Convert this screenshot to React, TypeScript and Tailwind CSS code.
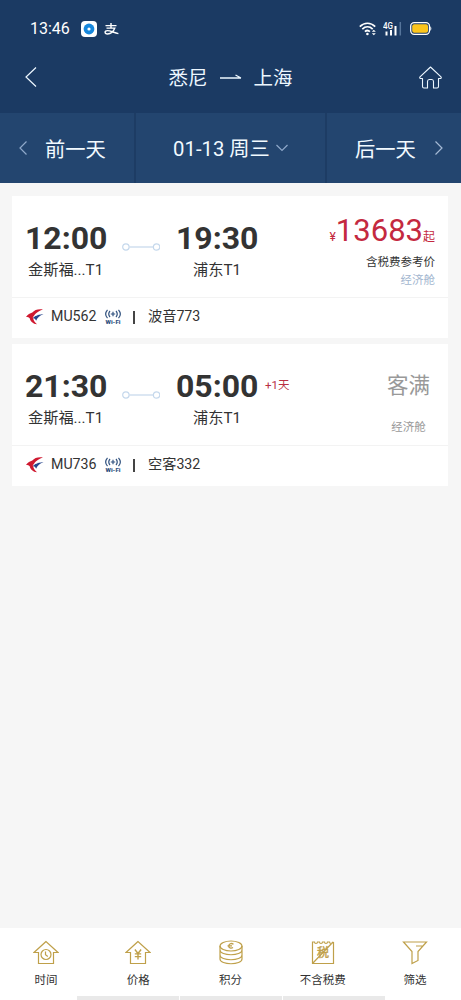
import React from 'react';

interface Flight {
  depart: string;
  arrive: string;
  nextDay?: string;
  price?: string;
  no: string;
  plane: string;
}

const flights: Flight[] = [
  { depart: '12:00', arrive: '19:30', price: '13683', no: 'MU562', plane: '波音773' },
  { depart: '21:30', arrive: '05:00', nextDay: '+1天', no: 'MU736', plane: '空客332' },
];

const StatusBar: React.FC = () => (
  <div className="flex h-[44px] items-center pt-[13px] pr-[29px] pl-[30px] text-white">
    <span className="w-[51px] text-[16px] leading-none whitespace-nowrap">13:46</span>
    <svg width="16" height="16" viewBox="0 0 16 16">
      <rect width="16" height="16" rx="4" fill="#fff" />
      <circle cx="8" cy="8" r="5.4" fill="#1787dc" />
      <circle cx="8" cy="8" r="1.6" fill="#fff" />
    </svg>
    <svg className="ml-[7px]" width="15" height="12" viewBox="0 0 15 12" fill="none" stroke="#fff" strokeWidth="1.4">
      <path d="M1.5 2.6h11M7 0v5M2.5 5.1h8.3C9.7 8 7.3 11 3.5 11 .3 11 .3 7.6 3.4 7.6c3.2 0 6.8 2.3 11 3" />
    </svg>
    <svg className="ml-auto" width="18" height="14" viewBox="0 0 18 14" fill="none" stroke="#fff" strokeWidth="1.7">
      <path d="M.8 4.6c4.5-4.5 10.9-4.5 15.4 0M3.3 7.2c3.1-3 7.3-3 10.4 0M5.9 9.7c1.5-1.4 3.5-1.5 5 0" />
      <circle cx="8.4" cy="12" r="1.3" fill="#fff" stroke="none" />
      <path d="M12.8 9.7l2-2 2 2zM12.8 11.2l2 2 2-2z" fill="#fff" stroke="none" />
    </svg>
    <svg className="ml-[6px]" width="20" height="15" viewBox="0 0 20 15">
      <text x="0" y="7.5" fontSize="8.5" fontWeight="500" fill="#fff" textLength="10" lengthAdjust="spacingAndGlyphs">4G</text>
      <path d="M3.5 10.5v4M8 9v5.5M12.5 5v9.5" stroke="#fff" strokeWidth="2" />
      <path d="M17.3 1v13.5" stroke="#56759b" strokeWidth="1.5" />
    </svg>
    <svg className="ml-[7px]" width="22" height="13" viewBox="0 0 22 13">
      <rect x=".7" y=".7" width="18.8" height="11.6" rx="3.5" fill="none" stroke="#fff" strokeWidth="1.3" />
      <rect x="2.2" y="2.2" width="15.8" height="8.6" rx="2" fill="#fcc51c" />
      <path d="M20.3 4.2c1.4.8 1.4 3.8 0 4.6z" fill="#fff" />
    </svg>
  </div>
);

const TitleBar: React.FC = () => (
  <div className="flex h-[69px] items-center px-[19px] pb-[3px] text-[#edf7ff]">
    <svg className="ml-[6px]" width="12" height="20" viewBox="0 0 12 20" fill="none" stroke="currentColor" strokeWidth="1.2">
      <path d="M11 .5L1 10l10 9.5" />
    </svg>
    <div className="flex flex-1 items-center justify-center pt-[3px] pl-[5px] text-[19.5px]">
      <span>悉尼</span>
      <svg className="mx-[12px] mb-[3px]" width="22" height="8" viewBox="0 0 22 8" fill="none" stroke="currentColor" strokeWidth="1.3">
        <path d="M0 5h21M15.5 2l5.5 3" />
      </svg>
      <span>上海</span>
    </div>
    <svg className="mt-[1px]" width="23" height="23" viewBox="0 0 23 23" fill="none" stroke="currentColor" strokeWidth="1.1" strokeLinejoin="round">
      <path d="M11.5 1L22 10.8c.6.7.1 1.7-.8 1.7h-1.7v8c0 .9-.6 1.5-1.5 1.5h-3.500v-6.500c0-1.200-.7-2-1.800-2h-2.400c-1.100 0-1.800.8-1.800 2V22H5c-.9 0-1.500-.6-1.500-1.500v-8H1.800c-.9 0-1.400-1-.8-1.700z" />
    </svg>
  </div>
);

const DayTabs: React.FC = () => (
  <div className="flex h-[70px] bg-[#23456f] text-[20.3px] text-[#f2faff]">
    <div className="flex w-[136px] items-center border-r-2 border-[#1d3c64] pl-[19px]">
      <svg width="8" height="14" viewBox="0 0 8 14" fill="none" stroke="#8fa9ca" strokeWidth="1.2">
        <path d="M7.5.5L1 7l6.500 6.500" />
      </svg>
      <span className="ml-[18px] pt-[4px]">前一天</span>
    </div>
    <div className="flex w-[191px] items-center justify-center border-r-2 border-[#1d3c64]">
      <span className="pt-[3px]">01-13 周三</span>
      <svg className="ml-[6px]" width="12" height="8" viewBox="0 0 12 8" fill="none" stroke="#8fa9ca" strokeWidth="1.2">
        <path d="M.5 1L6 6.500 11.500 1" />
      </svg>
    </div>
    <div className="flex flex-1 items-center justify-between pr-[18px] pl-[28px]">
      <span className="pt-[4px]">后一天</span>
      <svg width="8" height="14" viewBox="0 0 8 14" fill="none" stroke="#a5bad5" strokeWidth="1.2">
        <path d="M.5.5L7 7 .5 13.500" />
      </svg>
    </div>
  </div>
);

const AirlineLogo: React.FC = () => (
  <svg width="18" height="16" viewBox="0 0 18 16">
    <path d="M17 .4C12-.2 8.500.8 6.300 3.600 4 4.300 1.800 5.600 0 8c1.800 0 3 .4 3.700 1.300C4.400 12.500 7 15 11 15.300 8.600 13.200 7 11 7.300 8.700 8 5.300 11 2.600 17 .4z" fill="#cf1930" />
    <path d="M17.500 5.300C13 4.700 9 5.900 6.800 9.300c1.400-.5 2.600.3 3.300 2.400C11.500 8.700 13.800 6.500 17.500 5.300z" fill="#28478e" />
    <path d="M16.500 5.100C12 4.600 8.600 5.600 6.200 9.200 8.800 6.800 12.500 5.700 16.500 5.100z" fill="#fff" />
  </svg>
);

const WifiBadge: React.FC = () => (
  <svg width="16" height="16" viewBox="0 0 16 16" fill="none" stroke="#31527f" strokeWidth="1.2">
    <path d="M2.500.8c-2.200 2.500-2.200 5.900 0 8.400M5 2c-1.500 1.800-1.500 4.200 0 6M13.500.8c2.200 2.500 2.200 5.900 0 8.400M11 2c1.500 1.800 1.500 4.200 0 6M8 2.800v4.400M5.800 5h4.400" />
    <text x=".5" y="15" fontSize="5.5" fontWeight="900" fill="#31527f" stroke="none" textLength="15" lengthAdjust="spacingAndGlyphs">Wi-Fi</text>
  </svg>
);

const FlightCard: React.FC<{ flight: Flight }> = ({ flight }) => (
  <div className="flex h-[142px] flex-col bg-white text-[#333]">
    <div className="flex h-[102px] border-b border-[#f3f3f3] pl-[13px]">
      <div className="w-[83px] pt-[23px]">
        <div className="text-[32px] leading-[38px] font-bold whitespace-nowrap">{flight.depart}</div>
        <div className="pl-[3px] text-[15.2px] leading-[26px] whitespace-nowrap">金斯福...T1</div>
      </div>
      <svg className="mt-[46px] ml-[14px]" width="38" height="10" viewBox="0 0 38 10" fill="none" stroke="#c5d8ec" strokeWidth="1.2">
        <circle cx="3.9" cy="5" r="3.2" />
        <circle cx="34.6" cy="5" r="3.2" />
        <path d="M7.500 5h23.500" />
      </svg>
      <div className="ml-[16px] w-[83px] pt-[23px]">
        <div className="text-[32px] leading-[38px] font-bold whitespace-nowrap">{flight.arrive}</div>
        <div className="pl-[17px] text-[15.2px] leading-[26px] whitespace-nowrap">浦东T1</div>
      </div>
      <span className="ml-[6px] pt-[32px] text-[11.5px] leading-[18px] whitespace-nowrap text-[#b92f43]">{flight.nextDay}</span>
      {flight.price ? (
        <div className="ml-auto flex flex-col items-end pr-[13px] pt-[16px] text-[11.5px] whitespace-nowrap">
          <div className="flex items-baseline text-[#c42940]">
            <span className="text-[12px]">¥</span>
            <span className="text-[31px] leading-[38px]">{flight.price}</span>
            <span className="text-[12px]">起</span>
          </div>
          <span className="mt-[3px] leading-[18px]">含税费参考价</span>
          <span className="leading-[19px] text-[#a3b6cf]">经济舱</span>
        </div>
      ) : (
        <div className="ml-auto flex flex-col items-center pr-[18px] pt-[26px] whitespace-nowrap text-[#999]">
          <span className="text-[21.5px] leading-[32px]">客满</span>
          <span className="mt-[16px] text-[11.5px] leading-[18px]">经济舱</span>
        </div>
      )}
    </div>
    <div className="flex h-[38px] items-center pl-[14px] text-[14.2px]">
      <AirlineLogo />
      <span className="ml-[7px] w-[54px]">{flight.no}</span>
      <WifiBadge />
      <span className="ml-[12px] h-[13px] w-[1.5px] bg-[#444]" />
      <span className="ml-[13.5px]">{flight.plane}</span>
    </div>
  </div>
);

const HOUSE = 'M13 1.5L1 12.5h4.5v11h15v-11H25z';

const filters = [
  {
    label: '时间',
    icon: (
      <>
        <path d={HOUSE} />
        <circle cx="13" cy="14.5" r="5" />
        <path d="M12.5 11.5v3.300l2.300 1.700" />
      </>
    ),
  },
  {
    label: '价格',
    icon: (
      <>
        <path d={HOUSE} />
        <path d="M9.900 9.500l3.100 4 3.100-4M13 13.500v6M9.800 13.900h6.400M9.800 16.600h6.400" strokeWidth="1.4" />
      </>
    ),
  },
  {
    label: '积分',
    icon: (
      <>
        <ellipse cx="13" cy="6" rx="11" ry="5" />
        <path d="M2 6v4c0 6.300 22 6.300 22 0V6M2 10v5c0 6.300 22 6.300 22 0v-5M2 15v4c0 6.300 22 6.300 22 0v-4" />
        <path d="M15.500 4.200c-2.500-1.600-4.500-.2-4.800 1.800-.2 1.700 2.300 2.800 4.300 1.500M9.500 5.800H14" strokeWidth="1.3" />
      </>
    ),
  },
  {
    label: '不含税费',
    icon: (
      <>
        <path d="M2.500 2h2c0 2 3 2 3 0h2c0 2 3 2 3 0h2c0 2 3 2 3 0h2c0 2 3 2 4 0v21.500h-21zM2.500 23.500L23 2" />
        <text x="13" y="17" fontSize="12" textAnchor="middle" fill="#bfa04a" stroke="#bfa04a" strokeWidth=".4">税</text>
      </>
    ),
  },
  {
    label: '筛选',
    icon: <path d="M1.500 2h23l-8.500 9.500v9l-6 3v-12zM14 6h7" />,
  },
];

const FilterBar: React.FC = () => (
  <div className="flex h-[72px] flex-col bg-white">
    <div className="flex h-[68px] text-[11.5px] text-[#333]">
      {filters.map(({ label, icon }) => (
        <div key={label} className="flex flex-1 flex-col items-center pt-[12px]">
          <svg width="26" height="25" viewBox="0 0 26 25" fill="none" stroke="#bfa04a" strokeWidth="1.2">
            {icon}
          </svg>
          <span className="mt-[6px] leading-[18px]">{label}</span>
        </div>
      ))}
    </div>
    <div className="mx-auto flex h-[4px] w-[308px] gap-px">
      <span className="flex-1 bg-[#e9e9e9]" />
      <span className="flex-1 bg-[#e9e9e9]" />
      <span className="flex-1 bg-[#e9e9e9]" />
    </div>
  </div>
);

const App: React.FC = () => {
  return (
    <div className="flex h-[1000px] w-[461px] flex-col overflow-hidden bg-[#f6f6f6] font-[Roboto,'Noto_Sans_CJK_SC',sans-serif]">
      <header className="bg-[#1b3a63]">
        <StatusBar />
        <TitleBar />
        <DayTabs />
      </header>
      <main className="flex flex-1 flex-col gap-[6px] pt-[13px] pr-[13px] pl-[12px]">
        {flights.map((flight) => (
          <FlightCard key={flight.no} flight={flight} />
        ))}
      </main>
      <FilterBar />
    </div>
  );
};

export default App;
